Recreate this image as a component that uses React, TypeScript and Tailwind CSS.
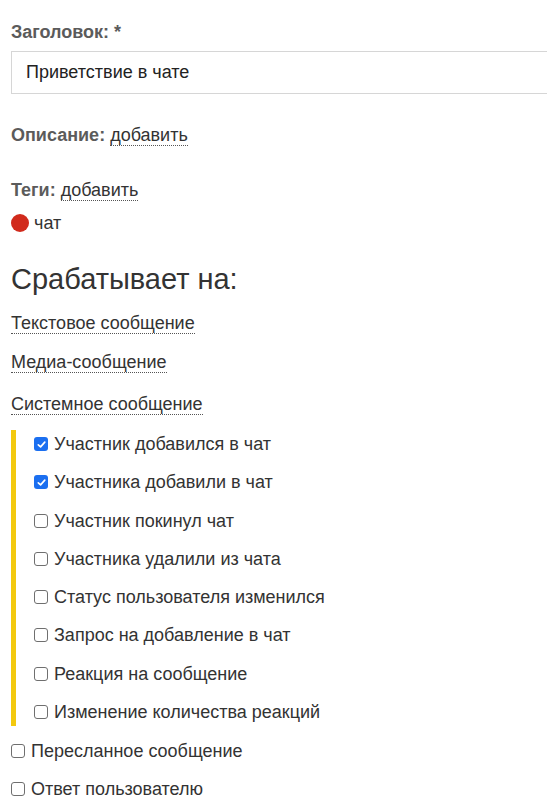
import React from "react";

const chatEvents = [
  { label: "Участник добавился в чат", checked: true },
  { label: "Участника добавили в чат", checked: true },
  { label: "Участник покинул чат", checked: false },
  { label: "Участника удалили из чата", checked: false },
  { label: "Статус пользователя изменился", checked: false },
  { label: "Запрос на добавление в чат", checked: false },
  { label: "Реакция на сообщение", checked: false },
  { label: "Изменение количества реакций", checked: false },
];

function Box({ checked }: { checked: boolean }) {
  if (checked) {
    return (
      <span className="flex h-[14px] w-[14px] shrink-0 items-center justify-center rounded-[3px] bg-[#1b6ff0]">
        <svg viewBox="0 0 12 12" className="h-[11px] w-[11px]">
          <path d="M2.5 6.3 L5 8.6 L9.6 3.4" fill="none" stroke="white" strokeWidth="1.8" strokeLinecap="round" strokeLinejoin="round" />
        </svg>
      </span>
    );
  }
  return <span className="h-[14px] w-[14px] shrink-0 rounded-[3px] border border-[#6f6f6f] bg-white" />;
}

function Dotted({ children }: { children: React.ReactNode }) {
  return (
    <span className="border-b border-dotted border-[#555] leading-[19px]">{children}</span>
  );
}

export default function App() {
  return (
    <div
      className="min-h-screen overflow-hidden bg-white pl-[11px] text-[18px] text-[#333]"
      style={{ fontFamily: "'Liberation Sans', Arial, sans-serif" }}
    >
      <div className="pt-[22px] font-bold text-[#5b5b5b] leading-[20px]">Заголовок: *</div>
      <div className="mt-[9px] -mr-4 flex h-[43px] items-center border border-[#d6d6d6] pl-[14px] text-[#222]">
        Приветствие в чате
      </div>

      <div className="mt-[31px] leading-[20px]">
        <span className="font-bold text-[#5b5b5b]">Описание: </span>
        <Dotted>добавить</Dotted>
      </div>

      <div className="mt-[35px] leading-[20px]">
        <span className="font-bold text-[#5b5b5b]">Теги: </span>
        <Dotted>добавить</Dotted>
      </div>

      <div className="mt-[13px] flex items-center gap-[5px] leading-[20px]">
        <span className="h-[18px] w-[18px] rounded-full bg-[#d12a1c]" />
        <span>чат</span>
      </div>

      <h2 className="mt-[29px] text-[29px] leading-[34px] text-[#333]">Срабатывает на:</h2>

      <div className="mt-[17px] flex flex-col gap-[19px] leading-[20px]">
        <div><Dotted>Текстовое сообщение</Dotted></div>
        <div><Dotted>Медиа-сообщение</Dotted></div>
        <div className="mt-[3px]"><Dotted>Системное сообщение</Dotted></div>
      </div>

      <div className="mt-[16px] flex">
        <div className="w-[5px] bg-[#f3c90f]" />
        <div className="flex flex-col gap-[18.3px] py-[4px] pl-[18px]">
          {chatEvents.map((e) => (
            <label key={e.label} className="flex h-[20px] items-center gap-[6px] leading-[20px]">
              <Box checked={e.checked} />
              <span>{e.label}</span>
            </label>
          ))}
        </div>
      </div>

      <div className="mt-[15px] flex flex-col gap-[18px]">
        <label className="flex h-[20px] items-center gap-[6px] leading-[20px]">
          <Box checked={false} />
          <span>Пересланное сообщение</span>
        </label>
        <label className="flex h-[20px] items-center gap-[6px] leading-[20px]">
          <Box checked={false} />
          <span>Ответ пользователю</span>
        </label>
      </div>
    </div>
  );
}
